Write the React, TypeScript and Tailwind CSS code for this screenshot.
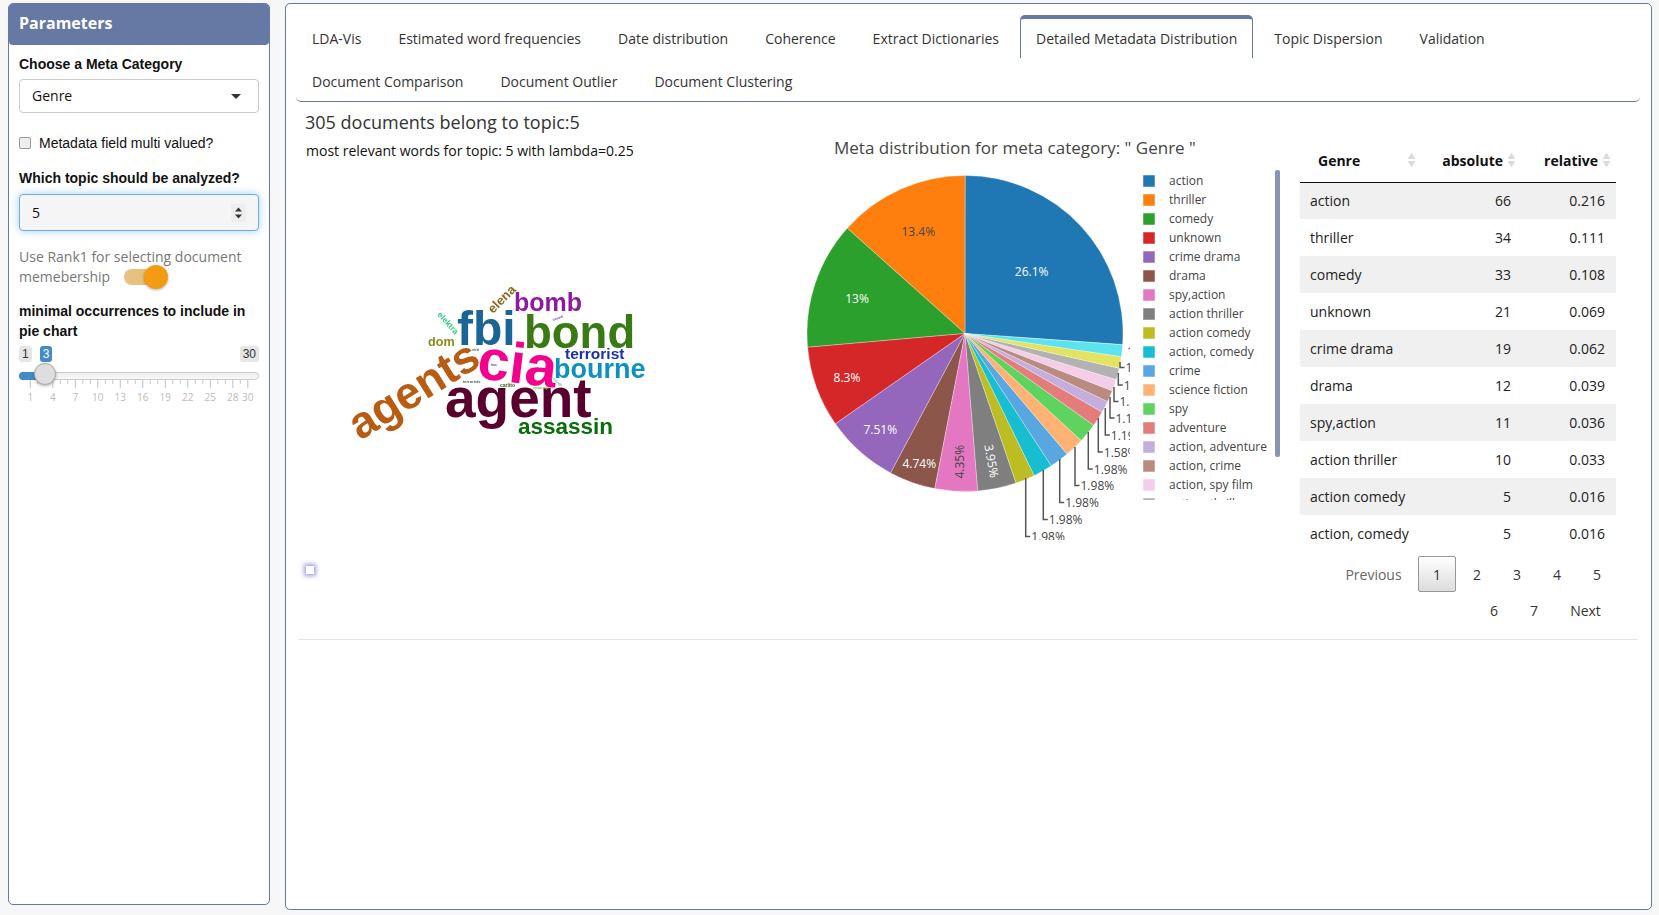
import React from "react";

const tabs = [
  "LDA-Vis",
  "Estimated word frequencies",
  "Date distribution",
  "Coherence",
  "Extract Dictionaries",
  "Detailed Metadata Distribution",
  "Topic Dispersion",
  "Validation",
  "Document Comparison",
  "Document Outlier",
  "Document Clustering",
];

const slices = [
  { name: "action", pct: 26.1, color: "#1f77b4" },
  { name: "thriller", pct: 13.4, color: "#ff7f0e" },
  { name: "comedy", pct: 13, color: "#2ca02c" },
  { name: "unknown", pct: 8.3, color: "#d62728" },
  { name: "crime drama", pct: 7.51, color: "#9467bd" },
  { name: "drama", pct: 4.74, color: "#8c564b" },
  { name: "spy,action", pct: 4.35, color: "#e377c2" },
  { name: "action thriller", pct: 3.95, color: "#7f7f7f" },
  { name: "action comedy", pct: 1.98, color: "#bcbd22" },
  { name: "action, comedy", pct: 1.98, color: "#17becf" },
  { name: "crime", pct: 1.98, color: "#58a7e0" },
  { name: "science fiction", pct: 1.98, color: "#ffb273" },
  { name: "spy", pct: 1.98, color: "#5fd35f" },
  { name: "adventure", pct: 1.58, color: "#e57c7c" },
  { name: "action, adventure", pct: 1.19, color: "#c4aedd" },
  { name: "action, crime", pct: 1.19, color: "#ba8c80" },
  { name: "action, spy film", pct: 1.19, color: "#f4cde8" },
  { name: "action, thriller", pct: 1.19, color: "#b2b2b2" },
  { name: "yellow", pct: 1.19, color: "#e3e362" },
  { name: "cyan", pct: 1.19, color: "#5be3ee" },
];

const rows = [
  ["action", 66, "0.216"],
  ["thriller", 34, "0.111"],
  ["comedy", 33, "0.108"],
  ["unknown", 21, "0.069"],
  ["crime drama", 19, "0.062"],
  ["drama", 12, "0.039"],
  ["spy,action", 11, "0.036"],
  ["action thriller", 10, "0.033"],
  ["action comedy", 5, "0.016"],
  ["action, comedy", 5, "0.016"],
];

// pie drawn counter clockwise from 94deg, coords are relative to the svg at (790,160)
const CX = 175;
const CY = 173.5;
const R = 158;

function point(deg: number, r = R) {
  const a = (deg * Math.PI) / 180;
  return [CX + r * Math.sin(a), CY - r * Math.cos(a)];
}

function PieSlices() {
  let angle = 94;
  return (
    <>
      {slices.map((s) => {
        const end = angle - (s.pct / 100) * 360;
        const [x1, y1] = point(angle);
        const [x2, y2] = point(end);
        const large = angle - end > 180 ? 1 : 0;
        angle = end;
        return (
          <path
            key={s.name}
            d={`M${CX} ${CY}L${x1} ${y1}A${R} ${R} 0 ${large} 0 ${x2} ${y2}Z`}
            fill={s.color}
            stroke="#fff"
            strokeOpacity={0.6}
            strokeWidth={0.5}
          />
        );
      })}
    </>
  );
}

// [x1, y1, y2, label] leader lines, bottom up
const leaders: [number, number, number, string][] = [
  [235.7, 318, 376.5, "1.98%"],
  [253.3, 310, 359.5, "1.98%"],
  [269.7, 299, 342.5, "1.98%"],
  [285, 287, 325.5, "1.98%"],
  [298.3, 272, 309, "1.98%"],
  [308.3, 258, 292, "1.58%"],
  [315.3, 248, 275, "1.19%"],
  [320, 237, 258, "1.19%"],
  [324, 227, 241.5, "1.19%"],
  [328.3, 213, 225, "1.19%"],
  [330, 202, 207.5, "1.19%"],
];

const inside: [string, number, number, number, string][] = [
  ["26.1%", 241.7, 111.7, 0, "#fff"],
  ["13.4%", 128.3, 71.7, 0, "#444"],
  ["13%", 67, 138.3, 0, "#fff"],
  ["8.3%", 57, 217.3, 0, "#fff"],
  ["7.51%", 90.3, 269.3, 0, "#fff"],
  ["4.74%", 129.3, 303.3, 0, "#fff"],
  ["4.35%", 169.3, 301.7, -90, "#444"],
  ["3.95%", 201.7, 301, 80, "#fff"],
];

function PieChart() {
  return (
    <svg width={340} height={380} className="shrink-0 font-['Open_Sans',sans-serif]">
      <PieSlices />
      {inside.map(([t, x, y, rot, c]) => (
        <text
          key={t}
          x={x}
          y={y}
          fill={c}
          fontSize={12}
          textAnchor="middle"
          dominantBaseline="central"
          transform={rot ? `rotate(${rot} ${x} ${y})` : undefined}
        >
          {t}
        </text>
      ))}
      {leaders.map(([x, y1, y2, label], i) => (
        <g key={i}>
          <path d={`M${x} ${y1}V${y2}h4.5`} fill="none" stroke="#555" strokeWidth={1.5} />
          <text x={x + 5.5} y={y2} fill="#444" fontSize={12} dominantBaseline="central">
            {label}
          </text>
        </g>
      ))}
      <text x={337} y={191} fill="#444" fontSize={12} dominantBaseline="central">
        1
      </text>
    </svg>
  );
}

function Legend() {
  return (
    <div className="ml-[13px] mt-[11.5px] flex h-[328px] w-[132px] flex-col overflow-hidden text-[12px] text-[#444]">
      {slices.slice(0, 18).map((s) => (
        <div key={s.name} className="flex h-[19px] shrink-0 items-center gap-[14px] whitespace-nowrap">
          <svg width={12} height={12} className="shrink-0">
            <rect width={12} height={12} fill={s.color} stroke="#fff" strokeOpacity={0.5} />
          </svg>
          {s.name}
        </div>
      ))}
    </div>
  );
}

function WordCloud() {
  const words: [string, number, number, number, number, string][] = [
    ["agent", 445, 417, 55, 0, "#5a002e"],
    ["agents", 360, 441, 45, -32, "#b85c14"],
    ["cia", 476, 378, 57, 7, "#f5008c"],
    ["fbi", 457, 345, 48, 0, "#1a6496"],
    ["bond", 524, 348, 45.5, 0, "#3a7a14"],
    ["bomb", 514, 311, 25, 0, "#8e1aa0"],
    ["bourne", 554, 378, 27, 0, "#1090c0"],
    ["terrorist", 565, 359, 15.5, 0, "#1a30b0"],
    ["assassin", 518, 434, 22.5, 0, "#0a6e0a"],
    ["dom", 428, 346, 12.6, 0, "#8f8a1a"],
    ["elena", 493, 314, 13, -45, "#8a6a1a"],
    ["elektra", 437, 315, 8.3, 48, "#2fd080"],
    ["vitti", 472, 351, 4, 0, "#666"],
    ["terrorists", 463, 383, 4, 0, "#555"],
    ["carlito", 500, 387, 5, 0, "#3a5a20"],
    ["spionaje", 533, 389, 4, 0, "#8cc850"],
    ["casual", 553, 321, 3.5, -20, "#6a3ab0"],
    ["iran", 491, 366, 3, 0, "#444a90"],
    ["hostage", 551, 378, 3.5, 40, "#70b8a0"],
  ];
  return (
    <svg width={330} height={180} viewBox="330 270 330 180" className="ml-[32px] mt-[109px] block font-['Liberation_Sans',sans-serif] blur-[0.4px]">
      {words.map(([t, x, y, size, rot, c]) => (
        <text
          key={t}
          x={x}
          y={y}
          fontSize={size}
          fontWeight={700}
          fill={c}
          transform={rot ? `rotate(${rot} ${x} ${y})` : undefined}
        >
          {t}
        </text>
      ))}
    </svg>
  );
}

function SortIcon() {
  return (
    <svg width={9} height={16} viewBox="0 0 9 16" className="shrink-0">
      <path d="M4.5 0.5L8.5 7H0.5Z" fill="#dcdcdc" />
      <path d="M4.5 15.5L8.5 9H0.5Z" fill="#dcdcdc" />
    </svg>
  );
}

function MetaTable() {
  return (
    <table className="w-[316px] table-fixed border-collapse text-[14px] text-[#222]">
      <thead>
        <tr className="h-[41px] border-b border-[#111] text-[14px] font-bold text-[#111]">
          <th className="w-[121px] p-0 pb-[2px] text-left">
            <div className="flex items-center justify-between pl-[18px] pr-[5px]">
              Genre
              <SortIcon />
            </div>
          </th>
          <th className="w-[100px] p-0 pb-[2px]">
            <div className="flex items-center justify-end gap-[4px] pr-[5px]">
              absolute
              <SortIcon />
            </div>
          </th>
          <th className="w-[95px] p-0 pb-[2px]">
            <div className="flex items-center justify-end gap-[4px] pr-[5px]">
              relative
              <SortIcon />
            </div>
          </th>
        </tr>
      </thead>
      <tbody>
        {rows.map(([name, abs, rel], i) => (
          <tr key={name} className={`h-[37px] ${i % 2 === 0 ? "bg-[#f0f0f0]" : "bg-white"}`}>
            <td className="p-0 pl-[10px]">{name}</td>
            <td className="p-0 pr-[10px] text-right">{abs}</td>
            <td className="p-0 pr-[11px] text-right">{rel}</td>
          </tr>
        ))}
      </tbody>
    </table>
  );
}

function Pagination() {
  return (
    <div className="mt-[4px] flex w-[316px] flex-wrap justify-end gap-x-[2px] text-[14px] text-[#333]">
      <div className="flex h-[36px] w-[85px] items-center justify-center text-[#666]">Previous</div>
      <div className="flex h-[36px] w-[38px] items-center justify-center rounded-[2px] border border-[#979797] bg-gradient-to-b from-white to-[#dcdcdc]">1</div>
      {["2", "3", "4", "5", "6", "7"].map((n) => (
        <div key={n} className="flex h-[36px] w-[38px] items-center justify-center">{n}</div>
      ))}
      <div className="flex h-[36px] w-[61px] items-center justify-center">Next</div>
    </div>
  );
}

function Slider() {
  const major = [1, 4, 7, 10, 13, 16, 19, 22, 25, 28, 30];
  const x = (v: number) => 11.3 + (v - 1) * 7.5;
  return (
    <div className="relative mt-[5px] h-[56px] w-[240px]">
      <div className="flex justify-between text-[12px] leading-[16px] text-[#333]">
        <div className="flex gap-[8px]">
          <span className="rounded-[3px] bg-[#e6e6e6] px-[3px]">1</span>
          <span className="rounded-[3px] bg-[#428bca] px-[3px] text-white">3</span>
        </div>
        <span className="rounded-[3px] bg-[#e6e6e6] px-[3px]">30</span>
      </div>
      <div className="mt-[10px] h-[8px] rounded-full border border-[#ccc] bg-gradient-to-b from-[#eee] to-[#f8f8f8]">
        <div className="-m-px h-[8px] w-[20px] rounded-l-full bg-[#428bca]" />
      </div>
      <svg width={240} height={28} className="block font-['Open_Sans',sans-serif]">
        {Array.from({ length: 30 }, (_, i) => i + 1).map((v) => (
          <path
            key={v}
            d={`M${x(v)} 0V${major.includes(v) ? 8 : 4}`}
            stroke={major.includes(v) ? "#a8c8e8" : "#c8c8c8"}
          />
        ))}
        {major.map((v) => (
          <text key={v} x={x(v)} y={21} fontSize={10} fill="#bbb" textAnchor="middle">
            {v}
          </text>
        ))}
      </svg>
      <div className="absolute left-[15px] top-[17px] size-[22px] rounded-full border border-[#aaa] bg-[#dedede] shadow-[0_1px_3px_rgba(0,0,0,0.3)]" />
    </div>
  );
}

function Sidebar() {
  return (
    <div className="ml-[8px] mt-[3px] h-[902px] w-[262px] shrink-0 rounded-[5px] border border-[#6678a4] bg-white">
      <div className="flex h-[41px] items-center rounded-[4px] bg-[#6678a4] pb-[4px] pl-[10px] font-['Open_Sans',sans-serif] text-[16px] font-bold text-white">
        Parameters
      </div>
      <div className="px-[10px] font-['Liberation_Sans',sans-serif] text-[14px] leading-[20px] text-[#111]">
        <div className="mt-[9px] font-bold">Choose a Meta Category</div>
        <div className="relative mt-[5px] flex h-[34px] items-center rounded-[4px] border border-[#ccc] pl-[12px] font-['Open_Sans',sans-serif]">
          Genre
          <span className="absolute right-[17px] top-[14px] size-0 border-x-[5px] border-t-[5px] border-x-transparent border-t-[#333]" />
        </div>
        <label className="mt-[20px] flex h-[20px] items-center gap-[8px]">
          <span className="size-[12px] rounded-[2px] border border-[#999] bg-[#eee]" />
          Metadata field multi valued?
        </label>
        <div className="mt-[15px] font-bold">Which topic should be analyzed?</div>
        <div className="mt-[6px] flex h-[37px] items-center justify-between rounded-[4px] border border-[#66afe9] bg-[#f5f5f5] pl-[12px] pr-[12px] font-['Open_Sans',sans-serif] shadow-[0_0_8px_rgba(102,175,233,0.6)]">
          5
          <svg width={15} height={18} viewBox="0 0 15 18" className="bg-[#eee]">
            <path d="M7.5 3.5L11 7.5H4Z" fill="#333" />
            <path d="M7.5 14.5L11 10.5H4Z" fill="#333" />
          </svg>
        </div>
        <div className="mt-[16px] font-['Open_Sans',sans-serif] text-[#777]">
          Use Rank1 for selecting document
          <div className="flex items-center">
            memebership
            <span className="relative ml-[14px] h-[16px] w-[36px] rounded-full bg-[#e8c07f]">
              <span className="absolute right-[-8px] top-[-4px] size-[24px] rounded-full bg-[#f39c12] shadow-[0_1px_3px_rgba(0,0,0,0.3)]" />
            </span>
          </div>
        </div>
        <div className="mt-[14px] font-bold">minimal occurrences to include in pie chart</div>
        <Slider />
      </div>
    </div>
  );
}

function Tabs() {
  return (
    <div className="flex flex-wrap rounded-b-[5px] border-b border-[#6678a4] text-[14px] text-[#333]">
      {tabs.map((t) =>
        t === "Detailed Metadata Distribution" ? (
          <div key={t} className="mr-[5px] flex h-[43px] items-center rounded-t-[5px] border-x border-t-[4px] border-[#6678a4] px-[15px]">
            {t}
          </div>
        ) : (
          <div key={t} className="mr-[5px] flex h-[43px] items-center border-x border-transparent px-[15px] pt-[4px]">
            {t}
          </div>
        ),
      )}
    </div>
  );
}

export default function App() {
  return (
    <div className="flex h-[915px] w-[1659px] overflow-hidden bg-[#f7f7f7] font-['Open_Sans',sans-serif]">
      <Sidebar />
      <div className="ml-[15px] mt-[3px] h-[907px] w-[1367px] shrink-0 rounded-[5px] border border-[#6678a4] bg-white pl-[10px] pr-[11px] pt-[11px]">
        <Tabs />
        <div className="mt-[7px] pl-[9px] text-[18px] leading-[26px] text-[#333]">305 documents belong to topic:5</div>
        <div className="mx-[2px] flex border-b border-[#e5e5e5] pb-[11px]">
          <div className="w-[492px] shrink-0">
            <div className="mt-[6px] pl-[8px] text-[14px] leading-[20px] text-[#111]">most relevant words for topic: 5 with lambda=0.25</div>
            <WordCloud />
            <div className="ml-[8px] mt-[116px] size-[8px] bg-white shadow-[0_0_4px_2px_rgba(120,120,220,0.7)]" />
          </div>
          <div className="w-[510px] shrink-0">
            <div className="ml-[44px] h-[25px] text-[17px] leading-[25px] text-[#444]">Meta distribution for meta category: " Genre "</div>
            <div className="flex">
              <PieChart />
              <Legend />
              <div className="ml-0 mt-[10px] h-[287px] w-[5px] rounded-[2px] bg-[#8a95b0]" />
            </div>
          </div>
          <div className="mt-[6px] w-[316px] shrink-0">
            <MetaTable />
            <Pagination />
          </div>
        </div>
      </div>
    </div>
  );
}
